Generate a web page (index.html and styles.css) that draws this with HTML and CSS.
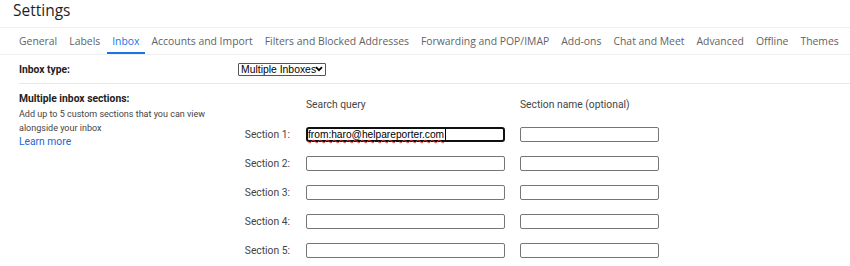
FILE: index.html
```html
<!DOCTYPE html>
<html lang="en">

<head>
     <meta charset="UTF-8">
     <title>Settings</title>
     <link rel="stylesheet" href="styles.css">
</head>

<body>
     <h1 class="title">Settings</h1>

     <nav class="tabs">
          <a href="#">General</a>
          <a href="#">Labels</a>
          <a href="#" class="active">Inbox</a>
          <a href="#">Accounts and Import</a>
          <a href="#">Filters and Blocked Addresses</a>
          <a href="#">Forwarding and POP/IMAP</a>
          <a href="#">Add-ons</a>
          <a href="#">Chat and Meet</a>
          <a href="#">Advanced</a>
          <a href="#">Offline</a>
          <a href="#">Themes</a>
     </nav>

     <div class="setting inbox-type">
          <div class="setting-name">Inbox type:</div>
          <div class="setting-value">
               <select class="type-select">
                    <option>Multiple Inboxes</option>
               </select>
          </div>
     </div>

     <div class="setting sections">
          <div class="setting-name">
               <div>Multiple inbox sections:</div>
               <p class="hint">Add up to 5 custom sections that you can view alongside your inbox</p>
               <a href="#" class="learn">Learn more</a>
          </div>
          <div class="section-grid">
               <span></span>
               <span class="col-head">Search query</span>
               <span class="col-head">Section name (optional)</span>

               <label class="sec-label">Section 1:</label>
               <div class="field query focused"><span class="misspelt">from:haro@helpareporter.com</span><span class="caret"></span></div>
               <div class="field name"></div>

               <label class="sec-label">Section 2:</label>
               <div class="field query"></div>
               <div class="field name"></div>

               <label class="sec-label">Section 3:</label>
               <div class="field query"></div>
               <div class="field name"></div>

               <label class="sec-label">Section 4:</label>
               <div class="field query"></div>
               <div class="field name"></div>

               <label class="sec-label">Section 5:</label>
               <div class="field query"></div>
               <div class="field name"></div>
          </div>
     </div>
</body>

</html>
```

FILE: styles.css
```css
body {
     margin: 0;
     font-family: Roboto, Arial, sans-serif;
     color: #202124;
     background-color: #fff;
     overflow: hidden;
}

.title {
     margin: 0;
     padding: 0 0 0 13px;
     height: 27px;
     font-family: "Open Sans", Arial, sans-serif;
     font-size: 15.5px;
     font-weight: 400;
     line-height: 21px;
     color: #1f1f1f;
     border-bottom: 1px solid #efefef;
}

.tabs {
     display: flex;
     gap: 12px;
     padding: 0 0 0 19px;
     height: 26px;
     border-bottom: 1px solid #efefef;
     font-family: "Open Sans", Arial, sans-serif;
     font-size: 10.4px;
     white-space: nowrap;
}

.tabs a {
     display: flex;
     flex-shrink: 0;
     align-items: center;
     padding: 2px 0 0;
     color: #5f6368;
     text-decoration: none;
     border-bottom: 2px solid transparent;
}

.tabs a.active {
     color: #1a73e8;
     border-bottom-color: #1a73e8;
     margin: 0 -5px;
     padding: 2px 5px 0;
}

.setting {
     display: flex;
     margin-left: 19px;
     font-size: 10.3px;
}

.setting-name {
     width: 219px;
     font-weight: bold;
     color: #222;
}

.inbox-type {
     height: 28px;
     align-items: center;
     border-bottom: 1px solid #e8e8e8;
}

.type-select {
     appearance: none;
     font-family: "Liberation Sans", Arial, sans-serif;
     font-size: 10.4px;
     width: 88px;
     height: 13px;
     line-height: 11px;
     padding: 0 0 0 2px;
     margin: 0;
     border: 1px solid #555;
     border-radius: 1px;
     color: #000;
     background: #fff url("data:image/svg+xml,%3Csvg xmlns='http://www.w3.org/2000/svg' width='8' height='6' viewBox='0 0 8 6'%3E%3Cpath d='M1 1.2l3 3 3-3' fill='none' stroke='%23000' stroke-width='1.8'/%3E%3C/svg%3E") no-repeat right 2px center;
}

.sections {
     padding-top: 8px;
}

.hint {
     margin: 2px 0 0;
     font-weight: 400;
     font-size: 9px;
     line-height: 14px;
     color: #444;
     width: 195px;
}

.learn {
     display: block;
     font-weight: 400;
     font-size: 10.3px;
     color: #1a67d8;
     text-decoration: none;
}

.section-grid {
     display: grid;
     grid-template-columns: 52px 198px 139px;
     grid-auto-rows: 15px;
     column-gap: 16px;
     row-gap: 14px;
     padding-top: 6px;
     align-items: center;
}

.col-head {
     color: #444;
     align-self: start;
}

.sec-label {
     text-align: right;
     color: #444;
     white-space: nowrap;
}

.field {
     box-sizing: border-box;
     height: 15px;
     border: 1px solid #767676;
     border-radius: 2px;
     background: #fff;
}

.sec-label + .field {
     width: 199px;
}

.field.focused {
     border: 2px solid #101010;
     border-radius: 3px;
     display: flex;
     align-items: center;
     padding-left: 0;
     font-family: "Liberation Sans", Arial, sans-serif;
     font-size: 10.2px;
     color: #000;
}

.misspelt {
     text-decoration: underline wavy #e53935;
     text-decoration-thickness: 1px;
     text-underline-offset: 1px;
}

.caret {
     width: 1px;
     height: 11px;
     background: #000;
     margin-left: 1px;
}
```
